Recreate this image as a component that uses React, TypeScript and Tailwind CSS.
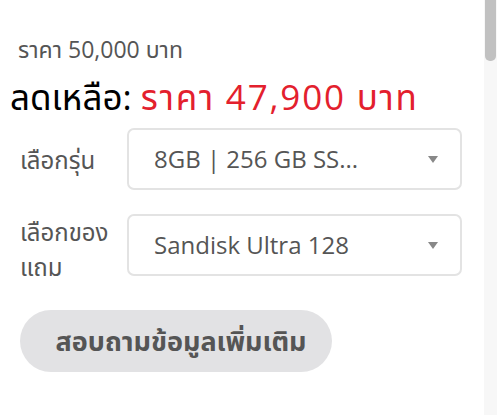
const font = "font-['Open_Sans','Noto_Sans','Noto_Sans_Thai',sans-serif]";

function Select({ value }: { value: string }) {
  return (
    <div className="flex-1 h-[62px] border-2 border-[#e3e3e3] rounded-[7px] flex items-center pl-[25px] pr-[22px] bg-white">
      <span className="flex-1 text-[24px] leading-[30px] text-[#555] whitespace-nowrap">{value}</span>
      <span className="w-0 h-0 border-l-[5px] border-r-[5px] border-t-[7px] border-l-transparent border-r-transparent border-t-[#888]" />
    </div>
  );
}

export default function App() {
  return (
    <div className={`relative w-[497px] h-[415px] bg-white overflow-hidden ${font}`}>
      <div className="w-[484px] pt-[35px]">
        <p className="pl-[18px] h-[28px] text-[23px] leading-[28px] text-[#555] whitespace-nowrap">ราคา 50,000 บาท</p>

        <p className="pl-[10px] mt-[12px] h-[44px] text-[35px] leading-[44px] text-black whitespace-nowrap">
          ลดเหลือ: <span className="text-[#e3202d] tracking-[1.8px]">ราคา 47,900 บาท</span>
        </p>

        <div className="mt-[9px] pl-[20px] pr-[22px] flex flex-col gap-[24px]">
          <div className="flex items-center">
            <span className="w-[107px] text-[24px] leading-[35px] text-[#555]">เลือกรุ่น</span>
            <Select value="8GB | 256 GB SS..." />
          </div>
          <div className="flex items-start">
            <span className="w-[107px] text-[24px] leading-[35px] text-[#555]">
              เลือกของ<br />แถม
            </span>
            <Select value="Sandisk Ultra 128" />
          </div>
        </div>

        <button className="ml-[20px] mt-[26px] w-[312px] h-[62px] pl-[10px] rounded-full bg-[#e2e2e4] text-[27px] font-bold text-[#555]">
          สอบถามข้อมูลเพิ่มเติม
        </button>
      </div>

      {/* scrollbar */}
      <div className="absolute top-0 right-0 w-[13px] h-full bg-[#f7f7f7]">
        <div className="h-[61px] mx-[1px] bg-[#c1c1c1] rounded-b-[5px]" />
      </div>
    </div>
  );
}
